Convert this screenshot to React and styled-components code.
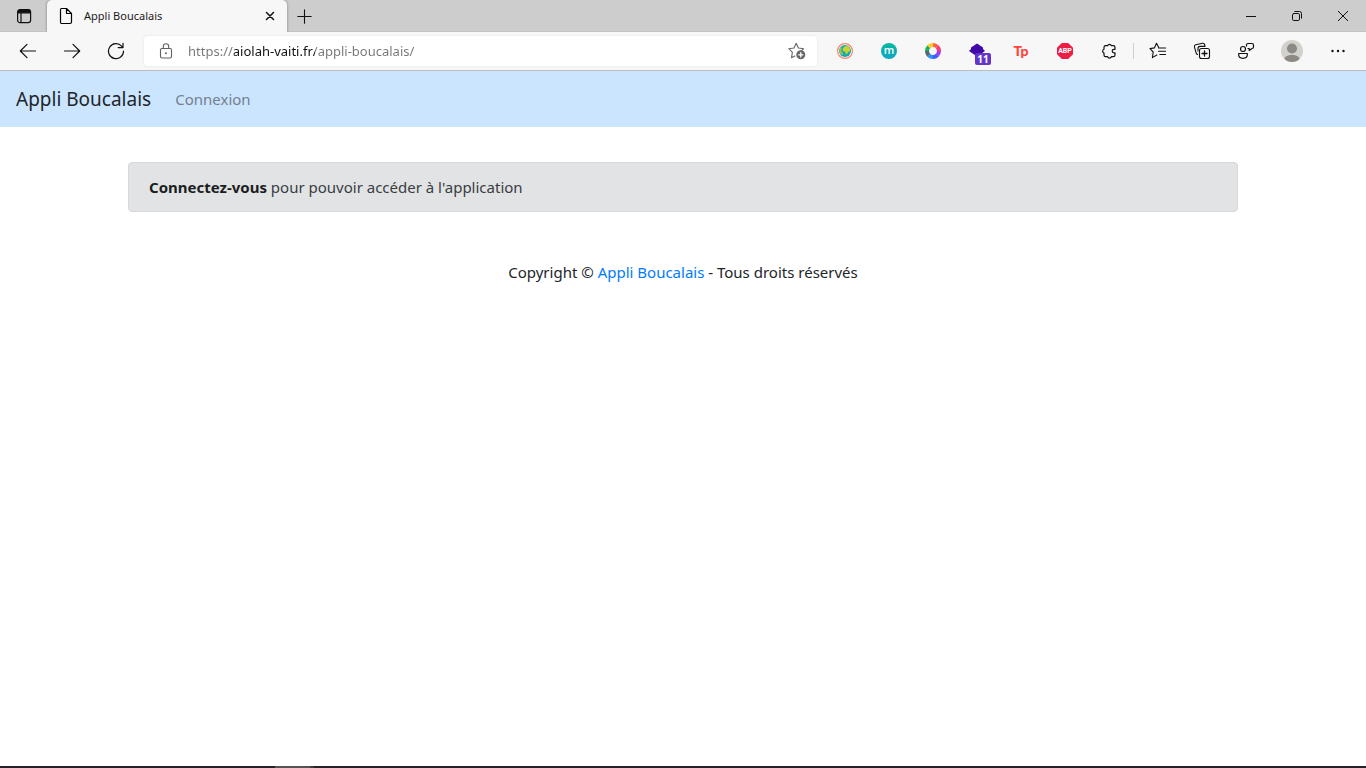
import React from "react";
import styled, { createGlobalStyle } from "styled-components";

const GlobalStyle = createGlobalStyle`
  *, *::before, *::after { box-sizing: border-box; }
  body {
    margin: 0;
    background: #fff;
    font-family: "Noto Sans", "Open Sans", sans-serif;
  }
`;

const Window = styled.div`
  min-height: 100vh;
  display: flex;
  flex-direction: column;
`;

const TabStrip = styled.header`
  display: flex;
  height: 32px;
  background: #cdcdcd;
  box-shadow: inset 0 -1px 0 #c3c3c3;
`;

const IconButton = styled.button`
  flex: none;
  width: ${(p) => p.$width || 44}px;
  margin: 0 ${(p) => p.$gap || 0}px;
  padding: 0;
  border: 0;
  background: none;
  color: #111;
  display: flex;
  align-items: center;
  justify-content: center;
`;

const Tab = styled.div`
  width: 240px;
  padding-left: 10px;
  display: flex;
  align-items: center;
  background: #f7f7f7;
  border-radius: 5px 5px 0 0;
  box-shadow: 0 0 3px rgba(0, 0, 0, 0.4);
  clip-path: inset(0 -4px 0 -4px);
`;

const TabTitle = styled.span`
  flex: 1;
  padding-left: 9px;
  font-size: 11px;
  line-height: 16px;
  color: #1b1b1b;
`;

const WindowControls = styled.div`
  display: flex;
  margin-left: auto;
`;

const Toolbar = styled.div`
  display: flex;
  height: 39px;
  padding: 0 6px;
  background: #f7f7f7;
  border-bottom: 1px solid #bcbdbf;
`;

const AddressBar = styled.div`
  flex: 1;
  min-width: 0;
  margin: 4px 6px;
  display: flex;
  background: #fff;
  border-radius: 4px;
  box-shadow: 0 0 3px rgba(0, 0, 0, 0.08);
`;

const AddressInput = styled.input`
  flex: 1;
  min-width: 0;
  padding: 0;
  border: 0;
  outline: 0;
  font-family: "Noto Sans", sans-serif;
  font-size: 13px;
  color: transparent;
  background: linear-gradient(to right, #767676 46px, #111 46px, #111 127px, #767676 127px);
  -webkit-background-clip: text;
  background-clip: text;
`;

const Separator = styled.span`
  width: 1px;
  height: 16px;
  margin: 0 2px;
  align-self: center;
  background: #d0d0d0;
`;

const Navbar = styled.nav`
  display: flex;
  align-items: center;
  gap: 24px;
  height: 56px;
  padding: 0 16px;
  background: #cce5ff;
`;

const Brand = styled.a`
  font-size: 19px;
  line-height: 30px;
  color: #212529;
  text-decoration: none;
`;

const NavLink = styled.a`
  font-size: 15px;
  line-height: 24px;
  color: #73808d;
  text-decoration: none;
`;

const Container = styled.main`
  width: 100%;
  max-width: 1140px;
  margin: 0 auto;
  padding: 35px 15px 0;
  flex: 1;
`;

const Alert = styled.div`
  padding: 12px 20px;
  border: 1px solid #d6d8db;
  border-radius: 4px;
  background: #e2e3e5;
  color: #383d41;
  font-size: 15px;
  line-height: 24px;

  strong { color: #1b1e21; font-weight: 700; }
`;

const Copyright = styled.footer`
  margin-top: 48px;
  text-align: center;
  font-size: 15px;
  line-height: 24px;
  color: #212529;

  a { color: #007bff; text-decoration: none; }
`;

const Taskbar = styled.div`
  height: 2px;
  padding-left: 275px;
  display: flex;
  background: #222326;
`;

const TaskbarItem = styled.span`
  width: 39px;
  background: #555558;
  border-right: 4px solid #3c3c3f;
`;

const Svg = ({ size = 16, children, w = 1.1 }) => (
  <svg width={size} height={size} viewBox={`0 0 ${size} ${size}`} fill="none"
    stroke="currentColor" strokeWidth={w} strokeLinecap="round" strokeLinejoin="round" aria-hidden="true">
    {children}
  </svg>
);

const TabsIcon = () => (
  <Svg size={16} w={1.2}>
    <rect x="1.6" y="1.6" width="13" height="13" rx="2.4" />
    <path d="M2 3.5Q2 2 3.6 2H12.6Q14.2 2 14.2 3.5V4.8H2Z" fill="currentColor" />
    <path d="M5 5V14.4" />
  </Svg>
);
const PageIcon = () => (
  <Svg size={18} w={1.2}>
    <path d="M4.5 1.5H9.5L14.5 6.5V15Q14.5 16.5 13 16.5H4.5Q3.5 16.5 3.5 15V3Q3.5 1.5 4.5 1.5ZM9.5 1.8V6.5H14.2" />
  </Svg>
);
const CloseTabIcon = () => <Svg size={10} w={1.5}><path d="M1.5 1.5L8.5 8.5M8.5 1.5L1.5 8.5" /></Svg>;
const PlusIcon = () => <Svg size={15} w={1.1}><path d="M7.5 .8V14.2M.8 7.5H14.2" /></Svg>;
const MinimizeIcon = () => <Svg size={10} w={1}><path d="M0 5.5H10" /></Svg>;
const RestoreIcon = () => (
  <Svg size={10} w={1}>
    <rect x=".5" y="2.5" width="7" height="7" rx="1.3" />
    <path d="M2.8 .5H7.5Q9.5 .5 9.5 2.5V7.2" />
  </Svg>
);
const CloseIcon = () => <Svg size={10} w={1}><path d="M.3 .3L9.7 9.7M9.7 .3L.3 9.7" /></Svg>;
const BackIcon = () => <Svg size={18} w={1.2}><path d="M16.5 9H1.5M8 2.3L1.3 9L8 15.7" /></Svg>;
const ForwardIcon = () => <Svg size={18} w={1.2}><path d="M1.5 9H16.5M10 2.3L16.7 9L10 15.7" /></Svg>;
const ReloadIcon = () => (
  <Svg size={18} w={1.2}>
    <path d="M16.5 9A7.5 7.5 0 1 1 14.6 4.2L16 5.6M16 1.3V5.6H11.2" />
  </Svg>
);
const LockIcon = () => (
  <Svg size={16}>
    <g stroke="#606060">
      <rect x="2.5" y="5.5" width="11" height="9.5" rx="1.4" />
      <path d="M5.3 5.3V3.4A2.7 2.7 0 0 1 10.7 3.4V5.3" />
    </g>
    <circle cx="8" cy="10.2" r="1" fill="#606060" stroke="none" />
  </Svg>
);
const AddFavoriteIcon = () => (
  <Svg size={18}>
    <path stroke="#666" d="M8.2 1.3L10.4 6L15.7 6.7L13.8 8.5M6.8 14L3.5 15.7L4.4 10.4L.8 6.7L6 6L8.2 1.3" />
    <circle cx="12.8" cy="12.8" r="4.5" fill="#666" stroke="none" />
    <path d="M12.8 10.7V14.9M10.7 12.8H14.9" stroke="#fff" strokeWidth="1.3" />
  </Svg>
);
const GlobeIcon = () => (
  <Svg size={16}>
    <circle cx="8" cy="8" r="7.4" fill="#fff" stroke="#ff8066" strokeWidth="1.2" />
    <circle cx="8" cy="8" r="6" fill="#18a7b5" stroke="none" />
    <path fill="#c6d62c" stroke="none" d="M6.5 4.5L8.5 3L11.5 3.4L13.3 6.2L12.8 8.6L11 8.8L10.2 11L8.8 11.2L8.4 8.8L6 8.2L5.6 6Z" />
    <path fill="#8fca4f" stroke="none" d="M3.2 5L5 4.2L4.2 7.6L6 10.2L5.6 12.6L3.2 10.6L2.3 8Z" />
  </Svg>
);
const Monogram = styled.span`
  width: 16px;
  height: 16px;
  border-radius: 8px;
  background: linear-gradient(#09b89f, #0ba6c8);
  color: #fff;
  font: 600 11px/14px "Open Sans", sans-serif;
  text-align: center;
`;
const WHEEL = ["#ff5a4a", "#ef3d77", "#a13cf0", "#415bff", "#2695f5", "#5b6570", "#16b35a", "#ffc928"];
const WheelIcon = () => (
  <Svg size={16}>
    {WHEEL.map((color, i) => (
      <circle key={color} cx="8" cy="8" r="6" stroke={color} strokeWidth="4" strokeLinecap="butt"
        pathLength="8" strokeDasharray="1.04 6.96" transform={`rotate(${i * 45 - 90} 8 8)`} />
    ))}
  </Svg>
);
const BadgedIcon = styled.span`
  position: relative;
  width: 18px;
  height: 16px;
`;
const Badge = styled.span`
  position: absolute;
  left: 7px;
  top: 10px;
  width: 16px;
  height: 12px;
  border-radius: 2px;
  background: #6435c9;
  color: #fff;
  font: 700 10px/12px "Open Sans", sans-serif;
  text-align: center;
`;
const StackIcon = () => (
  <Svg size={18}>
    <path fill="#4309a8" stroke="none" d="M9 .5L15 4.5V6L17 8L9 13.4L1 8L3 6V4.5Z" />
  </Svg>
);
const TpMark = styled.span`
  color: #ff4438;
  font: 900 14px/16px Lato, "Open Sans", sans-serif;
`;
const AbpMark = styled.span`
  width: 16px;
  height: 16px;
  background: #ed1e45;
  color: #fff;
  font: 700 7px/16px Roboto, sans-serif;
  text-align: center;
  clip-path: polygon(30% 0, 70% 0, 100% 30%, 100% 70%, 70% 100%, 30% 100%, 0 70%, 0 30%);
`;
const PuzzleIcon = () => (
  <Svg size={16} w={1.2}>
    <path d="M4.5 2.7H6.6A2 2 0 0 1 10.4 2.7H12.3Q14 2.7 14 4.4V6.3H13A1.8 1.8 0 0 0 13 9.9H14V12Q14 13.7 12.3 13.7H10.4A2 2 0 0 1 6.6 13.7H4.5Q3 13.7 3 12V10.1A2 2 0 0 1 3 6.3V4.4Q3 2.7 4.5 2.7Z" />
  </Svg>
);
const FavoritesIcon = () => (
  <Svg size={18}>
    <path d="M9.5 6H10L7.5 1.3L5.4 5.9L1 6.6L4.2 10L3.4 15.6L7.8 13M10.8 6H16.6M9.5 9.3H16.6M10.8 12.5H16.6" />
  </Svg>
);
const CollectionsIcon = () => (
  <Svg size={18}>
    <path d="M4.5 12.5L3.4 11.8L1.4 4.8Q1.1 3.2 2.7 2.8L9.5 1.3Q11.2 1 11.6 2.5L12 4M5 9V6.6Q5 4.4 7 4.4H12" />
    <rect x="6.5" y="6.5" width="10" height="10" rx="2" />
    <path d="M11.5 9V14M9 11.5H14" strokeWidth="1.3" />
  </Svg>
);
const FeedbackIcon = () => (
  <Svg size={18} w={1.2}>
    <circle cx="6" cy="7" r="2.5" />
    <path d="M1.7 11.5H10.3V13Q10 16.3 6 16.3Q2 16.3 1.7 13ZM9.5 4V3Q9.5 1.5 11 1.5H15Q16.5 1.5 16.5 3V5Q16.5 6.4 15 6.5L12.2 8.5V6.5H11" />
  </Svg>
);
const AvatarIcon = () => (
  <Svg size={22}>
    <defs><clipPath id="avatar"><circle cx="11" cy="11" r="11" /></clipPath></defs>
    <g clipPath="url(#avatar)" stroke="none">
      <rect width="22" height="22" fill="#d3d1cd" />
      <circle cx="11" cy="8.5" r="5" fill="#8d8984" />
      <ellipse cx="11" cy="20" rx="8" ry="5.3" fill="#8d8984" />
    </g>
  </Svg>
);
const MoreIcon = () => (
  <Svg size={16}>
    <g fill="currentColor" stroke="none">
      <circle cx="2.5" cy="8" r="1.2" /><circle cx="8" cy="8" r="1.2" /><circle cx="13.5" cy="8" r="1.2" />
    </g>
  </Svg>
);

const Action = ({ label, children, ...rest }) => (
  <IconButton type="button" aria-label={label} {...rest}>{children}</IconButton>
);

export default function App() {
  return (
    <Window>
      <GlobalStyle />
      <TabStrip>
        <Action label="Onglets" $width={47}><TabsIcon /></Action>
        <Tab>
          <PageIcon />
          <TabTitle>Appli Boucalais</TabTitle>
          <Action label="Fermer l'onglet" $width={34}><CloseTabIcon /></Action>
        </Tab>
        <Action label="Nouvel onglet" $width={35}><PlusIcon /></Action>
        <WindowControls>
          <Action label="Réduire" $width={46}><MinimizeIcon /></Action>
          <Action label="Restaurer" $width={46}><RestoreIcon /></Action>
          <Action label="Fermer" $width={46}><CloseIcon /></Action>
        </WindowControls>
      </TabStrip>
      <Toolbar>
        <Action label="Précédent"><BackIcon /></Action>
        <Action label="Suivant"><ForwardIcon /></Action>
        <Action label="Actualiser"><ReloadIcon /></Action>
        <AddressBar>
          <Action label="Informations sur le site"><LockIcon /></Action>
          <AddressInput type="text" aria-label="Adresse" defaultValue="https://aiolah-vaiti.fr/appli-boucalais/" />
          <Action label="Ajouter aux favoris" $width={40}><AddFavoriteIcon /></Action>
        </AddressBar>
        <Action label="Globe"><GlobeIcon /></Action>
        <Action label="Extension m"><Monogram>m</Monogram></Action>
        <Action label="Couleurs"><WheelIcon /></Action>
        <Action label="Calques"><BadgedIcon><StackIcon /><Badge>11</Badge></BadgedIcon></Action>
        <Action label="Tp"><TpMark>Tp</TpMark></Action>
        <Action label="Adblock Plus"><AbpMark>ABP</AbpMark></Action>
        <Action label="Extensions"><PuzzleIcon /></Action>
        <Separator />
        <Action label="Favoris"><FavoritesIcon /></Action>
        <Action label="Collections"><CollectionsIcon /></Action>
        <Action label="Commentaires"><FeedbackIcon /></Action>
        <Action label="Profil" $gap={2}><AvatarIcon /></Action>
        <Action label="Plus"><MoreIcon /></Action>
      </Toolbar>
      <Navbar>
        <Brand href="#">Appli Boucalais</Brand>
        <NavLink href="#">Connexion</NavLink>
      </Navbar>
      <Container>
        <Alert><strong>Connectez-vous</strong> pour pouvoir accéder à l'application</Alert>
        <Copyright>Copyright © <a href="#">Appli Boucalais</a> - Tous droits réservés</Copyright>
      </Container>
      <Taskbar><TaskbarItem /></Taskbar>
    </Window>
  );
}
